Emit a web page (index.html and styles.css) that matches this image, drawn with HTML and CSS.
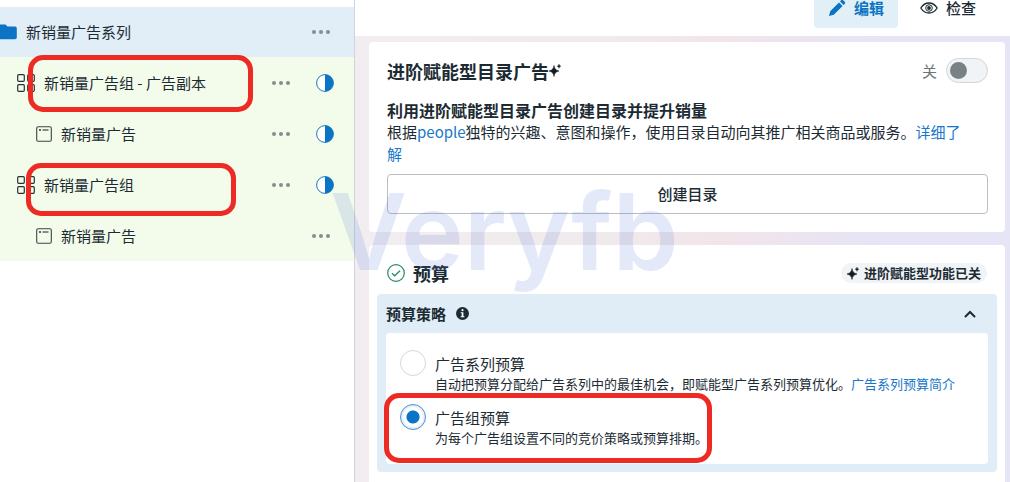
FILE: index.html
```html
<!DOCTYPE html>
<html lang="zh-CN">
<head>
<meta charset="utf-8">
<title>广告管理</title>
<link rel="stylesheet" href="styles.css">
</head>
<body>
<svg class="defs" aria-hidden="true">
  <symbol id="dots" viewBox="0 0 18 6"><circle cx="2" cy="3" r="2"/><circle cx="9" cy="3" r="2"/><circle cx="16" cy="3" r="2"/></symbol>
  <symbol id="half" viewBox="0 0 18 18"><circle cx="9" cy="9" r="8.4" fill="#fff" stroke="#1877c2" stroke-width="1"/><path d="M9 .6a8.4 8.4 0 0 1 0 16.8z" fill="#0c74c4"/></symbol>
  <symbol id="grid" viewBox="0 0 18 18"><g fill="none" stroke="#283236" stroke-width="1.2"><rect x=".7" y=".7" width="6.6" height="6.6" rx="1"/><rect x="10.7" y=".7" width="6.6" height="6.6" rx="1"/><rect x=".7" y="10.7" width="6.6" height="6.6" rx="1"/><rect x="10.7" y="10.7" width="6.6" height="6.6" rx="1"/></g></symbol>
  <symbol id="ad" viewBox="0 0 16 16"><rect x=".7" y=".7" width="14.6" height="14.6" rx="1.5" fill="none" stroke="#3a4447" stroke-width="1.1"/><circle cx="4" cy="4" r="1" fill="#283236"/><path d="M6.5 4h6" stroke="#283236" stroke-width="1.1"/></symbol>
  <symbol id="spark" viewBox="0 0 12 13"><path d="M5 1.5c.6 3.200 1.600 4.500 5 5.500-3.400 1-4.400 2.300-5 5.500C4.400 9.300 3.400 8 0 7c3.400-1 4.400-2.300 5-5.500z" stroke="#111b20" stroke-width=".5"/><path d="M10 0c.3 1.300.7 1.800 2 2.200-1.300.4-1.700.9-2 2.200-.3-1.300-.7-1.800-2-2.200 1.300-.4 1.700-.9 2-2.200z" stroke="#111b20" stroke-width=".3"/></symbol>
</svg>
<div class="app">
  <nav class="sidebar">
    <div class="row campaign">
      <svg class="folder" viewBox="0 0 17 16"><path d="M0 .5h5.500l2 2h7.500a1.800 1.800 0 0 1 1.800 1.800v9.200a1.800 1.800 0 0 1-1.800 1.800H0z" fill="#0c74c4"/></svg>
      <span class="label">新销量广告系列</span>
      <button class="more" aria-label="更多"><svg class="dots"><use href="#dots"/></svg></button>
    </div>
    <div class="row group">
      <svg class="icon18"><use href="#grid"/></svg>
      <span class="label">新销量广告组 - 广告副本</span>
      <button class="more" aria-label="更多"><svg class="dots"><use href="#dots"/></svg></button>
      <svg class="half"><use href="#half"/></svg>
      <span class="mark mark-copy"></span>
    </div>
    <div class="row ad">
      <svg class="icon16"><use href="#ad"/></svg>
      <span class="label">新销量广告</span>
      <button class="more" aria-label="更多"><svg class="dots"><use href="#dots"/></svg></button>
      <svg class="half"><use href="#half"/></svg>
    </div>
    <div class="row group">
      <svg class="icon18"><use href="#grid"/></svg>
      <span class="label">新销量广告组</span>
      <button class="more" aria-label="更多"><svg class="dots"><use href="#dots"/></svg></button>
      <svg class="half"><use href="#half"/></svg>
      <span class="mark mark-group"></span>
    </div>
    <div class="row ad last">
      <svg class="icon16"><use href="#ad"/></svg>
      <span class="label">新销量广告</span>
      <button class="more" aria-label="更多"><svg class="dots"><use href="#dots"/></svg></button>
    </div>
  </nav>
  <main class="main">
    <header class="toolbar">
      <button class="tab active"><svg class="icon18" viewBox="0 0 18 18"><path d="M1 17l1.200-4.800L11 3.400 14.600 7 5.800 15.800zM12 2.400l1.100-1.100a1.500 1.500 0 0 1 2.100 0l1.500 1.500a1.500 1.500 0 0 1 0 2.100L15.600 6z" fill="#0c74c4"/></svg>编辑</button>
      <button class="tab"><svg class="icon18" viewBox="0 0 18 18"><path d="M.8 9C3 5.500 5.800 4 9 4s6 1.500 8.200 5C15 12.500 12.200 14 9 14S3 12.500.8 9z" fill="none" stroke="#1c2b33" stroke-width="1.300"/><circle cx="9" cy="9" r="3.300" fill="none" stroke="#1c2b33"/><circle cx="9" cy="9" r="1.900" fill="#1c2b33"/></svg>检查</button>
    </header>
    <div class="content">
      <section class="card catalog">
        <div class="card-head">
          <h2>进阶赋能型目录广告</h2><svg class="spark"><use href="#spark"/></svg>
          <label class="switch"><span>关</span><input type="checkbox" role="switch"></label>
        </div>
        <h3>利用进阶赋能型目录广告创建目录并提升销量</h3>
        <p class="intro">根据<a href="#">people</a>独特的兴趣、意图和操作，使用目录自动向其推广相关商品或服务。<a href="#">详细了解</a></p>
        <button class="create">创建目录</button>
      </section>
      <section class="card budget">
        <div class="card-head">
          <svg class="icon18" viewBox="0 0 18 18"><circle cx="9" cy="9" r="8.300" fill="none" stroke="#2b8a66" stroke-width="1.200"/><path d="M5 9.300l2.700 2.500L13 6.700" fill="none" stroke="#2b8a66" stroke-width="1.300"/></svg>
          <h2>预算</h2>
          <span class="badge"><svg class="spark"><use href="#spark"/></svg>进阶赋能型功能已关</span>
        </div>
        <div class="panel">
          <div class="panel-head">
            <h4>预算策略</h4>
            <svg class="info" viewBox="0 0 13 13"><circle cx="6.500" cy="6.500" r="6.500" fill="#1c2b33"/><circle cx="6.500" cy="3.200" r="1.100" fill="#fff"/><path d="M4.700 5.300h2.700v4h1v1H4.700v-1h1v-3h-1z" fill="#fff"/></svg>
            <button class="collapse" aria-label="收起"><svg viewBox="0 0 12 8"><path d="M1.500 6.500L6 2l4.500 4.500" fill="none" stroke="#1c2b33" stroke-width="2" stroke-linecap="round"/></svg></button>
          </div>
          <div class="options">
            <div class="option">
              <input type="radio" name="budget" id="b1">
              <div class="option-text"><label for="b1">广告系列预算</label><p>自动把预算分配给广告系列中的最佳机会，即赋能型广告系列预算优化。<a href="#">广告系列预算简介</a></p></div>
            </div>
            <div class="option">
              <input type="radio" name="budget" id="b2" checked>
              <div class="option-text"><label for="b2">广告组预算</label><p>为每个广告组设置不同的竞价策略或预算排期。</p></div>
              <span class="mark mark-option"></span>
            </div>
          </div>
        </div>
      </section>
    </div>
  </main>
  <div class="watermark" aria-hidden="true">Veryfb</div>
</div>
</body>
</html>
```
FILE: styles.css
```css
* { box-sizing: border-box; }
body { margin: 0; color: #1c2b33; font: 15px/22px "Noto Sans CJK SC", sans-serif; }
h2, h3, h4, p { margin: 0; }
h2 { font-size: 18px; line-height: 24px; font-weight: 700; }
h3 { font-size: 16px; line-height: 22px; font-weight: 700; }
h4 { font-size: 15px; line-height: 22px; font-weight: 700; }
button { border: 0; padding: 0; background: none; color: inherit; font: inherit; }
a { color: #1877c9; text-decoration: none; }
svg { display: block; flex: none; }
.defs { position: absolute; width: 0; height: 0; }
.icon16 { width: 16px; height: 16px; }
.icon18 { width: 18px; height: 18px; }

.app { position: relative; display: flex; min-height: 100vh; overflow: hidden; }
.sidebar { flex: 0 0 355px; padding-top: 7px; border-right: 1px solid #cfd3da; background: #fff; }
.row { position: relative; display: flex; align-items: center; height: 51px; padding-right: 20px; background: #f3fcea; }
.campaign { height: 50px; padding-right: 24px; background: #e1edf7; }
.group { padding-left: 17px; }
.ad { padding-left: 36px; }
.last { padding-right: 24px; }
.folder { width: 17px; height: 16px; }
.label { flex: 1; padding-left: 9px; }
.dots { width: 18px; height: 6px; fill: #858d91; }
.half { width: 18px; height: 18px; margin-left: 26px; }

.mark { position: absolute; z-index: 1; border: 5px solid #ed2b24; border-radius: 15px; pointer-events: none; }
.mark-copy { top: -2px; left: 28px; width: 225px; height: 57px; }
.mark-group { top: 4px; left: 26px; width: 210px; height: 53px; }
.mark-option { top: -11px; left: -16px; width: 328px; height: 70px; }

.main { flex: 1; min-width: 0; display: flex; flex-direction: column; background: linear-gradient(90deg, #f2edf1 0%, #f0eaec 40%, #f2e5ea 55%, #e6e4f5 80%, #e6e5f6 100%); }
.toolbar { display: flex; justify-content: flex-end; gap: 8px; height: 36px; padding-right: 20px; background: #fff; }
.tab { display: flex; gap: 8px; height: 28px; padding: 0 14px 12px; align-items: center; line-height: 16px; border-radius: 0 0 4px 4px; font-weight: 500; }
.active { background: #e1eff7; color: #0c74c4; font-weight: 700; }

.content { flex: 1; display: flex; flex-direction: column; gap: 13px; padding: 6px 5px 0 14px; }
.card { background: #fff; border-radius: 4px; }
.card-head { display: flex; align-items: center; }
.catalog { padding: 16px 17px 18px 18px; }
.catalog .card-head { height: 25px; margin-bottom: 16px; }
.spark { width: 12px; height: 13px; fill: #111b20; }
.switch { display: flex; align-items: center; gap: 9px; margin-left: auto; color: #6c7478; }
.switch input { appearance: none; width: 42px; height: 25px; margin: 0; padding: 3px; border: 1px solid #d2d6da; border-radius: 13px; background: #f1f4f7; }
.switch input::before { content: ""; display: block; width: 17px; height: 17px; border-radius: 50%; background: #7a8185; }
.switch input:checked::before { margin-left: auto; }
.intro { padding-right: 20px; }
.create { display: block; width: 100%; height: 40px; margin-top: 9px; border: 1px solid #b8bec3; border-radius: 4px; font-weight: 500; }

.budget { flex: 1; padding: 14px 8px 10px; border-radius: 4px 4px 0 0; }
.budget > .card-head { gap: 8px; height: 28px; margin-bottom: 7px; padding: 0 10px; }
.badge { display: flex; align-items: center; gap: 5px; margin-left: auto; padding: 0 6px; border-radius: 10px; background: #f1f4f7; font-size: 13px; line-height: 20px; font-weight: 700; }
.panel { padding: 0 9px 8px; border-radius: 4px; background: #e1edf6; }
.panel-head { display: flex; align-items: center; gap: 10px; height: 39px; }
.info { width: 13px; height: 13px; }
.collapse { margin-left: auto; padding: 8px 12px; }
.collapse svg { width: 12px; height: 8px; }
.options { display: flex; flex-direction: column; gap: 11px; padding: 17px 14px; border-radius: 4px; background: #fff; }
.option { position: relative; display: flex; align-items: flex-start; gap: 9px; }
.option input { appearance: none; flex: none; width: 26px; height: 26px; margin: 0; border: 1px solid #d5d8da; border-radius: 50%; background: #fff; }
.option input:checked { border-color: #4a90d4; background: radial-gradient(circle, #0c74c4 0 6px, #fff 7px 9px, #e3effa 11px); }
.option-text { padding-top: 3px; }
.option-text label { display: block; }
.option p { font-size: 13px; line-height: 18px; }

.watermark { position: absolute; top: 172px; left: 330px; color: rgba(80, 120, 215, 0.16); font: 600 106px/120px Inter, sans-serif; pointer-events: none; }
```
